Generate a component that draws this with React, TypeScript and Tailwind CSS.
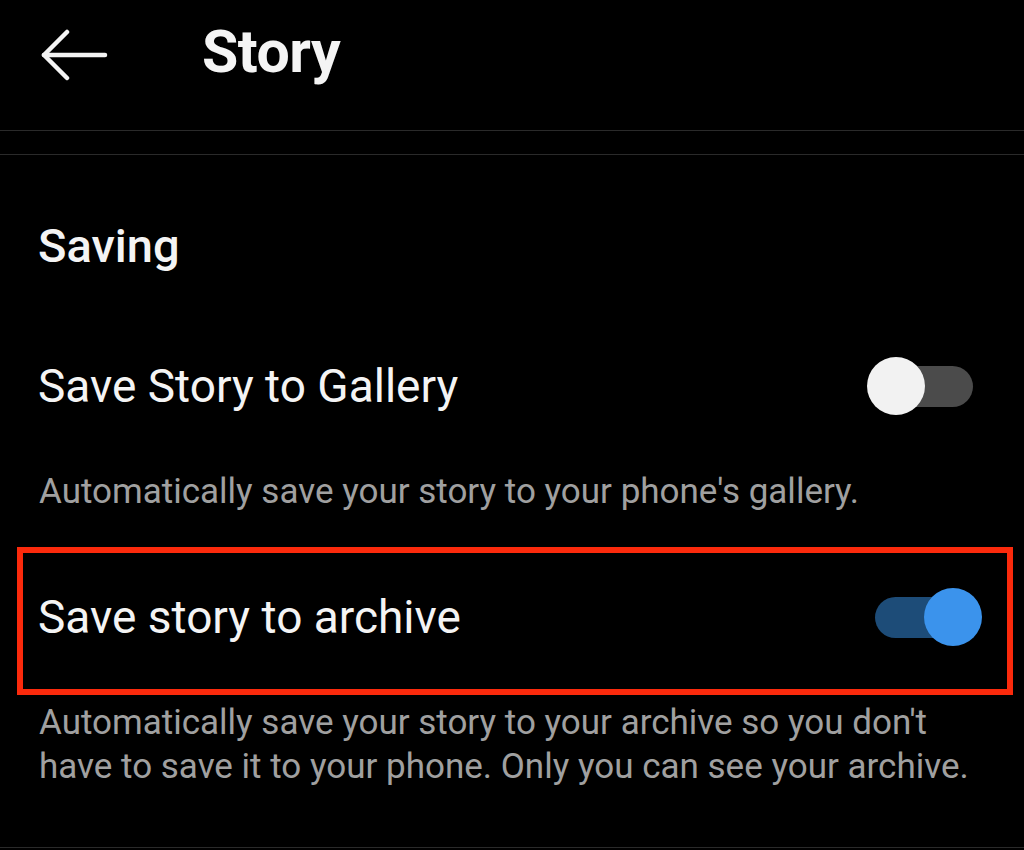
import { useState } from "react";

function Toggle({ on, onChange }: { on: boolean; onChange: () => void }) {
  return (
    <button onClick={onChange} className="relative w-[115px] h-[58px] shrink-0">
      <span className={`absolute left-[8px] top-[9px] w-[98px] h-[41px] rounded-full ${on ? "bg-[#1d4c78]" : "bg-[#4b4b4b]"}`} />
      <span className={`absolute top-0 w-[58px] h-[58px] rounded-full ${on ? "left-[57px] bg-[#3b93ec]" : "left-0 bg-[#f2f2f2]"}`} />
    </button>
  );
}

export default function App() {
  const [gallery, setGallery] = useState(false);
  const [archive, setArchive] = useState(true);

  return (
    <div className="w-[1024px] h-[850px] bg-black text-[#f4f4f4] overflow-hidden font-['Roboto',sans-serif]">
      <div className="h-[131px] border-b border-[#2a2a2a] flex items-start">
        <svg className="ml-[40px] mt-[29px] shrink-0" width="68" height="52" viewBox="0 0 68 52" fill="none" stroke="#f4f4f4" strokeWidth="4.5" strokeLinecap="round" strokeLinejoin="round">
          <path d="M4 26 H65" />
          <path d="M27 3 L4 26 L27 49" />
        </svg>
        <h1 className="ml-[94px] mt-[22px] text-[59px] leading-[59px] font-bold tracking-[-0.5px]">Story</h1>
      </div>
      <div className="h-[24px] border-b border-[#2a2a2a]" />

      <h2 className="mt-[63px] pl-[38px] text-[47px] leading-[56px] font-medium">Saving</h2>

      <div className="mt-[72px] h-[80px] pl-[38px] pr-[42px] flex items-center justify-between">
        <span className="text-[46px] leading-[56px]">Save Story to Gallery</span>
        <Toggle on={gallery} onChange={() => setGallery(!gallery)} />
      </div>
      <p className="mt-[44px] pl-[39px] text-[35px] leading-[44px] text-[#a0a0a0]">
        Automatically save your story to your phone's gallery.
      </p>

      <div className="mt-[33px] ml-[17px] mr-[11px] h-[148px] border-[6px] border-[#fb2a0c] pt-[24px] pb-[32px] pl-[15px] pr-[25px]">
        <div className="h-[80px] flex items-center justify-between">
          <span className="text-[46px] leading-[56px]">Save story to archive</span>
          <Toggle on={archive} onChange={() => setArchive(!archive)} />
        </div>
      </div>
      <p className="mt-[6px] pl-[39px] pr-[40px] text-[35px] leading-[44px] text-[#a0a0a0]">
        Automatically save your story to your archive so you don't have to save it to your phone. Only you can see your archive.
      </p>
      <div className="mt-[58px] border-b border-[#2a2a2a]" />
    </div>
  );
}
